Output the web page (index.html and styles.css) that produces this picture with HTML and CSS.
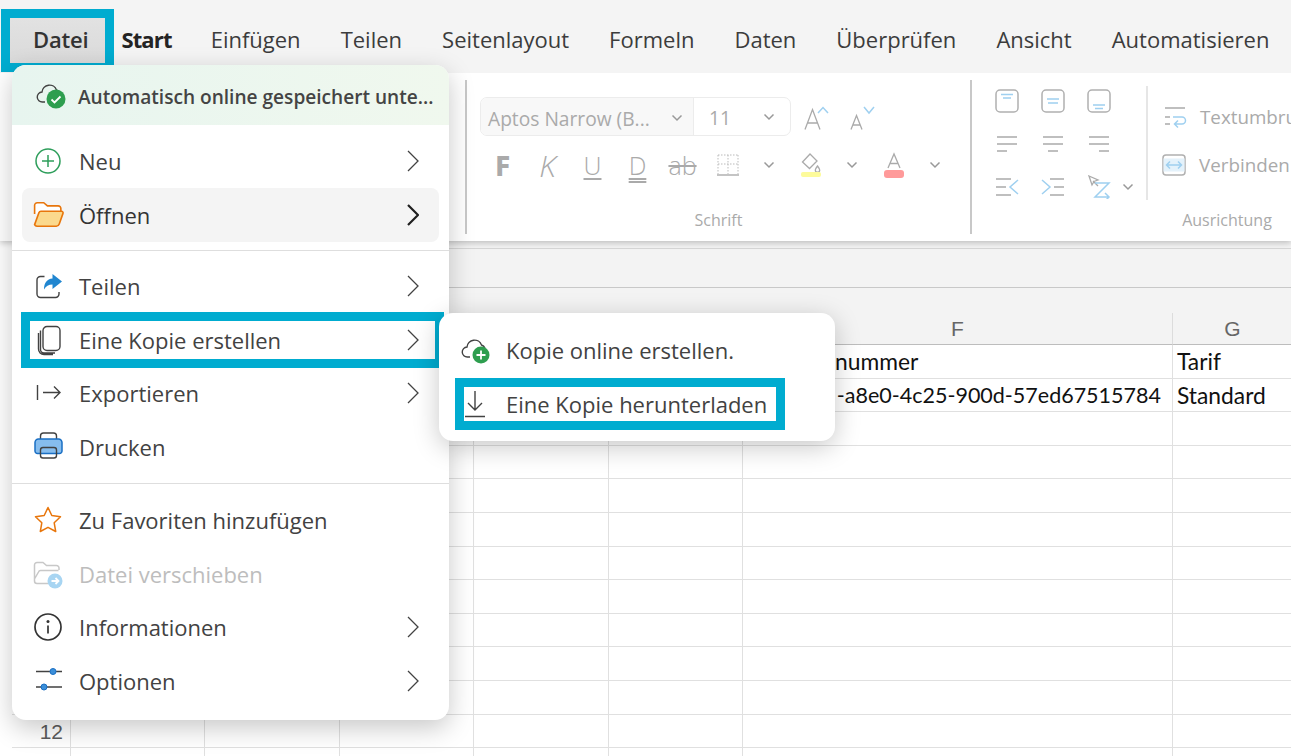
FILE: index.html
```html
<!DOCTYPE html>
<html lang="de">
<head>
<meta charset="utf-8">
<title>Excel – Datei</title>
<link rel="stylesheet" href="styles.css">
</head>
<body>
<div class="app">
  <nav class="tabs">
    <span class="tab tab-file">Datei</span>
    <span class="tab tab-active">Start</span>
    <span class="tab">Einfügen</span>
    <span class="tab">Teilen</span>
    <span class="tab">Seitenlayout</span>
    <span class="tab">Formeln</span>
    <span class="tab">Daten</span>
    <span class="tab">Überprüfen</span>
    <span class="tab">Ansicht</span>
    <span class="tab">Automatisieren</span>
  </nav>

  <section class="ribbon">
    <div class="group group-font">
      <div class="font-row">
        <div class="combo">
          <span class="combo-name">Aptos Narrow (B...<svg class="chev-s" viewBox="0 0 12 8"><path d="M1.500 1.500 6 6l4.500-4.500"/></svg></span>
          <span class="combo-size">11<svg class="chev-s" viewBox="0 0 12 8"><path d="M1.500 1.500 6 6l4.500-4.500"/></svg></span>
        </div>
        <svg class="grow" viewBox="0 0 30 32"><path class="g" d="M3 28.500 10.500 8.500 18 28.500M5.500 22h10"/><path class="b" d="M16 12l5-5.500 5 5.500"/></svg>
        <svg class="shrink" viewBox="0 0 30 32"><path class="g" d="M2 28.500 7.500 14.500 13 28.500M4 24h7"/><path class="b" d="M15 6l5 6 5-6"/></svg>
      </div>
      <div class="format-row">
        <span class="tool t-bold">F</span>
        <span class="tool t-italic">K</span>
        <span class="tool t-under">U</span>
        <span class="tool t-double">D</span>
        <span class="tool t-strike">ab</span>
        <span class="tool"><svg class="ic22" viewBox="0 0 22 24"><path class="dot" d="M1 2h20M1 11h20M1 2v19M11 2v19M21 2v19"/><path class="g2" d="M0 22h22"/></svg></span>
        <span class="drop"><svg class="chev-s" viewBox="0 0 12 8"><path d="M1.500 1.500 6 6l4.500-4.500"/></svg></span>
        <span class="tool"><svg class="ic22" viewBox="0 0 22 26"><path class="g" d="M10 2 2.500 10l7 6.500L17 9zM17.500 14c-1.500 2-2.200 3-2.200 4a2.200 2.200 0 0 0 4.400 0c0-1-.7-2-2.200-4z"/><rect class="swatch-y" x="1" y="20" width="20" height="5" rx="2"/></svg></span>
        <span class="drop"><svg class="chev-s" viewBox="0 0 12 8"><path d="M1.500 1.500 6 6l4.500-4.500"/></svg></span>
        <span class="tool"><svg class="ic22" viewBox="0 0 22 26"><path class="g" d="M5 16 11 2l6 14M7 11.500h8"/><rect class="swatch-r" x="1" y="18" width="20" height="8" rx="3"/></svg></span>
        <span class="drop"><svg class="chev-s" viewBox="0 0 12 8"><path d="M1.500 1.500 6 6l4.500-4.500"/></svg></span>
      </div>
      <div class="group-label">Schrift</div>
    </div>

    <div class="group group-align">
      <div class="align-body">
        <div class="align-grid">
          <span class="cell"><svg class="ic24" viewBox="0 0 24 24"><rect class="g2" x="1" y="1" width="22" height="22" rx="4"/><path class="b" d="M6 5.500h12M8 9h8"/></svg></span>
          <span class="cell"><svg class="ic24" viewBox="0 0 24 24"><rect class="g2" x="1" y="1" width="22" height="22" rx="4"/><path class="b" d="M6 10h12M7 14h10"/></svg></span>
          <span class="cell"><svg class="ic24" viewBox="0 0 24 24"><rect class="g2" x="1" y="1" width="22" height="22" rx="4"/><path class="b" d="M6 16h12M8 19.500h8"/></svg></span>
          <span></span>
          <span class="cell"><svg class="ic24" viewBox="0 0 24 24"><path class="g" d="M2 5h20M2 12h20M2 19h10"/></svg></span>
          <span class="cell"><svg class="ic24" viewBox="0 0 24 24"><path class="g" d="M2 5h20M2 12h20M7 19h10"/></svg></span>
          <span class="cell"><svg class="ic24" viewBox="0 0 24 24"><path class="g" d="M2 5h20M2 12h20M12 19h10"/></svg></span>
          <span></span>
          <span class="cell"><svg class="ic24" viewBox="0 0 24 24"><path class="g" d="M1 4h15M1 12h10M1 20h15"/><path class="b" d="M23 5l-8 7 8 7"/></svg></span>
          <span class="cell"><svg class="ic24" viewBox="0 0 24 24"><path class="g" d="M9 4h14M13 12h10M9 20h14"/><path class="b" d="M1 5l8 7-8 7"/></svg></span>
          <span class="cell"><svg class="ic24" viewBox="0 0 24 24"><path class="g" d="M2 1l9 4-4 1.500L5 10zM6 6l5 5"/><path class="b" d="M8 8h14L8 22h14M18 18l4 4-4 4"/></svg></span>
          <span class="cell"><svg class="chev-s" viewBox="0 0 12 8"><path d="M1.500 1.500 6 6l4.500-4.500"/></svg></span>
        </div>
        <div class="wrap-col">
          <div class="wrap-row"><svg class="ic24" viewBox="0 0 24 24"><path class="g" d="M2 3h20M2 12h5M2 19h5"/><path class="b" d="M10 12h9a3.500 3.500 0 0 1 0 7h-7M15 15.500l-3.500 3.500 3.500 3.500"/></svg><span>Textumbruch</span></div>
          <div class="wrap-row wrap-merge"><svg class="ic24" viewBox="0 0 24 24"><rect class="g2" x="1" y="2" width="22" height="20" rx="3"/><rect class="b-soft" x="1.500" y="5.500" width="21" height="13"/><path class="b" d="M5 12h14M8 8.500 4.500 12 8 15.500M16 8.500l3.500 3.500-3.500 3.500"/></svg><span>Verbinden</span></div>
        </div>
      </div>
      <div class="group-label">Ausrichtung</div>
    </div>
  </section>

  <div class="formula-band"><div class="formula-line"></div></div>

  <div class="sheet">
    <div class="head"></div><div class="head"></div><div class="head"></div><div class="head"></div><div class="head"></div><div class="head"></div><div class="head">F</div><div class="head">G</div>
    <div class="c"></div><div class="c"></div><div class="c"></div><div class="c"></div><div class="c"></div><div class="c"></div><div class="c val val-a">nummer</div><div class="c val">Tarif</div>
    <div class="c"></div><div class="c"></div><div class="c"></div><div class="c"></div><div class="c"></div><div class="c"></div><div class="c val val-b">-a8e0-4c25-900d-57ed67515784</div><div class="c val">Standard</div>
    <div class="c"></div><div class="c"></div><div class="c"></div><div class="c"></div><div class="c"></div><div class="c"></div><div class="c"></div><div class="c"></div>
    <div class="c"></div><div class="c"></div><div class="c"></div><div class="c"></div><div class="c"></div><div class="c"></div><div class="c"></div><div class="c"></div>
    <div class="c"></div><div class="c"></div><div class="c"></div><div class="c"></div><div class="c"></div><div class="c"></div><div class="c"></div><div class="c"></div>
    <div class="c"></div><div class="c"></div><div class="c"></div><div class="c"></div><div class="c"></div><div class="c"></div><div class="c"></div><div class="c"></div>
    <div class="c"></div><div class="c"></div><div class="c"></div><div class="c"></div><div class="c"></div><div class="c"></div><div class="c"></div><div class="c"></div>
    <div class="c"></div><div class="c"></div><div class="c"></div><div class="c"></div><div class="c"></div><div class="c"></div><div class="c"></div><div class="c"></div>
    <div class="c"></div><div class="c"></div><div class="c"></div><div class="c"></div><div class="c"></div><div class="c"></div><div class="c"></div><div class="c"></div>
    <div class="c"></div><div class="c"></div><div class="c"></div><div class="c"></div><div class="c"></div><div class="c"></div><div class="c"></div><div class="c"></div>
    <div class="c"></div><div class="c"></div><div class="c"></div><div class="c"></div><div class="c"></div><div class="c"></div><div class="c"></div><div class="c"></div>
    <div class="c rownum">12</div><div class="c"></div><div class="c"></div><div class="c"></div><div class="c"></div><div class="c"></div><div class="c"></div><div class="c"></div>
    <div class="c"></div><div class="c"></div><div class="c"></div><div class="c"></div><div class="c"></div><div class="c"></div><div class="c"></div><div class="c"></div>
  </div>

  <aside class="menu">
    <div class="menu-status">
      <svg class="icon" viewBox="0 0 30 30"><path class="stroke-d" d="M9 22H6.500a5 5 0 0 1-.5-10 7.500 7.500 0 0 1 14.500-2 6 6 0 0 1 3.500 3"/><circle cx="20" cy="19" r="9.500" fill="#2e9e4f"/><path class="stroke-w" d="M15.500 19.500l3 3 6-6"/></svg>
      <span class="status-text">Automatisch online gespeichert unte...</span>
    </div>
    <div class="menu-section sec-a">
      <div class="item"><svg class="icon" viewBox="0 0 30 30"><circle class="stroke-g" cx="15" cy="15" r="12"/><path class="stroke-g" d="M15 9v12M9 15h12"/></svg><span class="label">Neu</span><svg class="chev" viewBox="0 0 12 22"><path d="M1 1l10 10L1 21"/></svg></div>
      <div class="item item-hover"><svg class="icon" viewBox="0 1 28 28"><path d="M1.500 14V6a2.500 2.500 0 0 1 2.500-2.500h6l3.500 3h10a2.500 2.500 0 0 1 2.500 2.500v2.500" fill="#fff" stroke="#e8760c" stroke-width="1.500"/><path d="M1.500 24l4-11a2 2 0 0 1 2-1.500h19a1.500 1.500 0 0 1 1.500 2l-3.500 10a3 3 0 0 1-3 2H4a2.500 2.500 0 0 1-2.500-1.500z" fill="#fbd98d" stroke="#e8760c" stroke-width="1.500"/></svg><span class="label">Öffnen</span><svg class="chev" viewBox="0 0 12 22"><path d="M1 1l10 10L1 21"/></svg></div>
    </div>
    <div class="menu-section sec-b">
      <div class="item"><svg class="icon" viewBox="-1.500 0 30 30"><path class="stroke-d" d="M10 5.500H6a3.500 3.500 0 0 0-3.500 3.500v14A3.500 3.500 0 0 0 6 26.500h15a3.500 3.500 0 0 0 3.500-3.500v-2"/><path d="M18 3l9.500 7.500-9.500 7.500v-4.500c-4 0-6.500 1.500-8.500 5 0-6.500 3-10.500 8.500-11z" fill="#2086d0"/></svg><span class="label">Teilen</span><svg class="chev" viewBox="0 0 12 22"><path d="M1 1l10 10L1 21"/></svg></div>
      <div class="item item-marked"><svg class="icon" viewBox="-1 0 30 30"><rect class="stroke-d" x="9" y="1.500" width="17" height="24" rx="4"/><path class="stroke-d" d="M6.500 5.500v19a3.500 3.500 0 0 0 3.500 3.500h11M4.500 8v16a5.500 5.500 0 0 0 5.500 5.500h9"/></svg><span class="label">Eine Kopie erstellen</span><svg class="chev" viewBox="0 0 12 22"><path d="M1 1l10 10L1 21"/></svg></div>
      <div class="item"><svg class="icon" viewBox="0 0 30 30"><path class="stroke-d" d="M4.500 7v15M10 14.500h17M21 8.500l6 6-6 6"/></svg><span class="label">Exportieren</span><svg class="chev" viewBox="0 0 12 22"><path d="M1 1l10 10L1 21"/></svg></div>
      <div class="item"><svg class="icon" viewBox="-.5 2 30 30"><path class="stroke-d" d="M7 9V6a3 3 0 0 1 3-3h10a3 3 0 0 1 3 3v3" fill="#fff"/><path d="M5 9h20a3.500 3.500 0 0 1 3.500 3.500V21a2.500 2.500 0 0 1-2.500 2.500H4A2.500 2.500 0 0 1 1.500 21v-8.500A3.500 3.500 0 0 1 5 9z" fill="#86bdee" stroke="#1a6fc4" stroke-width="1.500"/><rect class="stroke-d" x="7" y="17.500" width="16" height="10.500" rx="2.500" fill="#fff"/></svg><span class="label">Drucken</span></div>
    </div>
    <div class="menu-section sec-c">
      <div class="item"><svg class="icon" viewBox="0 0 30 30"><path d="M15 2.500l3.800 8 8.700 1.200-6.300 6.100 1.500 8.700L15 22.300 7.300 26.500l1.500-8.700-6.300-6.100 8.700-1.200z" fill="none" stroke="#e8760c" stroke-width="1.500" stroke-linejoin="round"/></svg><span class="label">Zu Favoriten hinzufügen</span></div>
      <div class="item item-disabled"><svg class="icon" viewBox="0 0 30 30"><path d="M1.500 22V6A2.500 2.500 0 0 1 4 3.500h6l3.500 3h10a2.500 2.500 0 0 1 2.500 2.500v2M1.500 22a2.500 2.500 0 0 0 2.500 2.500h11M1.500 20l4-7a2.500 2.500 0 0 1 2-1.500h18" fill="none" stroke="#c8c8c8" stroke-width="1.500"/><circle cx="22" cy="22" r="7.500" fill="#a8d5f2"/><path class="stroke-w" d="M18.500 22h7M22.500 19l3 3-3 3"/></svg><span class="label">Datei verschieben</span></div>
      <div class="item"><svg class="icon" viewBox="0 0 30 30"><circle class="stroke-d2" cx="15" cy="15" r="13"/><circle cx="15" cy="9.500" r="1.500" fill="#333"/><path class="stroke-d2" d="M15 13.500v8" stroke-width="2.200"/></svg><span class="label">Informationen</span><svg class="chev" viewBox="0 0 12 22"><path d="M1 1l10 10L1 21"/></svg></div>
      <div class="item"><svg class="icon" viewBox="0 0 30 30"><path class="stroke-d" d="M3 5.500h26M3 21h26"/><circle cx="20" cy="5.500" r="3" fill="#3b8fd9" stroke="#1a6fc4"/><circle cx="11" cy="21" r="3" fill="#3b8fd9" stroke="#1a6fc4"/></svg><span class="label">Optionen</span><svg class="chev" viewBox="0 0 12 22"><path d="M1 1l10 10L1 21"/></svg></div>
    </div>
  </aside>

  <aside class="submenu">
    <div class="sub-item"><svg class="icon" viewBox="3 0 30 30"><path class="stroke-d" d="M9 22H6.500a5 5 0 0 1-.5-10 7.500 7.500 0 0 1 14.500-2 6 6 0 0 1 3.500 3"/><circle cx="20" cy="20" r="8.500" fill="#2e9e4f"/><path class="stroke-w" d="M20 15.500v9M15.500 20h9"/></svg><span class="label">Kopie online erstellen.</span></div>
    <div class="sub-item sub-marked"><svg class="icon" viewBox="3 0 30 30"><path class="stroke-d" d="M14 2v19M7 14l7 7 7-7M4 27.500h20"/></svg><span class="label">Eine Kopie herunterladen</span></div>
  </aside>
</div>
</body>
</html>
```
FILE: styles.css
```css
* { box-sizing: border-box; }
html, body { margin: 0; padding: 0; height: 100%; background: #fff; overflow: hidden; }
body { font-family: "Open Sans", "Noto Sans", sans-serif; color: #424242; }
.app { position: relative; width: 1291px; height: 756px; overflow: hidden; background: #fff; }

/* tabs */
.tabs { height: 73px; background: #f4f4f4; display: flex; align-items: center; gap: 40px; padding: 0 0 0 33px; font-size: 22px; white-space: nowrap; color: #3c3c3c; }
.tab { line-height: 30px; margin-top: 4px; }
.tab-file { font-weight: 600; color: #333; margin-right: -7px; letter-spacing: -.2px; position: relative; isolation: isolate; }
.tab-file::before { content: ""; position: absolute; left: -23px; right: -17px; top: -6px; bottom: -9px; background: linear-gradient(#e2e2e2, #dadada); outline: 9px solid #00acd0; z-index: -1; }
.tab-active { font-weight: 700; color: #242424; letter-spacing: -.85px; margin-right: -1px; }

/* ribbon */
.ribbon { position: relative; z-index: 1; height: 168px; background: #fff; box-shadow: 0 2px 6px rgba(0,0,0,.22); padding: 7px 0 7px 465px; display: flex; overflow: hidden; color: #aaa; clip-path: inset(0 0 -10px 0); }
.group { display: flex; flex-direction: column; border-left: 2px solid #c8c8c8; flex: none; }
.group-font { width: 505px; padding: 17px 0 4px 13px; }
.group-align { width: 512px; padding: 0 0 4px 12px; }
.group-label { margin-top: auto; text-align: center; font-size: 16px; line-height: 20px; color: #aaa; }
.group-font .group-label { padding-right: 13px; }
.group-align .group-label { padding-right: 12px; }

.font-row { display: flex; align-items: center; height: 39px; }
.combo { width: 311px; height: 39px; display: flex; border: 1px solid #ececec; border-radius: 7px; font-size: 19.200px; color: #aaa; overflow: hidden; }
.combo-name { width: 213px; flex: none; background: #f8f8f8; border-right: 1px solid #ececec; padding: 3px 10px 0 7px; display: flex; align-items: center; justify-content: space-between; }
.combo-size { flex: 1; display: flex; align-items: center; justify-content: space-between; padding: 1px 15px 0; }
.chev-s { width: 12px; height: 8px; flex: none; }
.chev-s path { fill: none; stroke: #999; stroke-width: 1.500; }
.grow { width: 30px; height: 32px; margin-left: 11px; }
.shrink { width: 30px; height: 32px; margin-left: 17px; }
.g { fill: none; stroke: #aaa; stroke-width: 1.300; }
.g2 { fill: none; stroke: #b0b0b0; stroke-width: 1.500; }
.b { fill: none; stroke: #9fd0f0; stroke-width: 1.500; }
.b-soft { fill: #e4f2fb; }
.dot { fill: none; stroke: #bbb; stroke-width: 1; stroke-dasharray: 1.500 1.500; }
.swatch-y { fill: #fdfb9b; }
.swatch-r { fill: #ff9a9a; }

.format-row { display: flex; align-items: center; height: 34px; margin-top: 12px; }
.tool { width: 45px; height: 34px; flex: none; display: flex; align-items: center; justify-content: center; font-size: 25px; color: #aaa; }
.drop { width: 38px; height: 34px; flex: none; display: flex; align-items: center; justify-content: center; padding-right: 1px; }
.ic22 { width: 22px; height: 26px; }
.ic24 { width: 24px; height: 24px; }
.t-bold { font-weight: 800; font-family: "Noto Sans", sans-serif; font-size: 28px; }
.t-italic { font-style: italic; font-weight: 300; font-size: 30px; }
.t-under { text-decoration: underline; text-underline-offset: 3px; text-decoration-thickness: 1.500px; font-weight: 300; }
.t-double { text-decoration: underline double; text-underline-offset: 3px; text-decoration-thickness: 1.500px; font-weight: 300; }
.t-strike { text-decoration: line-through; text-decoration-thickness: 1.500px; font-weight: 300; }

.align-body { display: flex; align-items: flex-start; }
.align-grid { display: grid; grid-template-columns: 46px 46px 46px 12px; grid-auto-rows: 42.700px; width: 150px; }
.cell { display: flex; align-items: center; justify-content: center; }
.wrap-col { margin: 6px 0 0 12px; border-left: 2px solid #e6e6e6; height: 114px; padding: 15px 0 0 15px; }
.wrap-row { display: flex; align-items: center; height: 32px; gap: 13px; font-size: 18.800px; color: #aaa; white-space: nowrap; }
.wrap-merge { margin-top: 16px; margin-left: -1px; }

/* band */
.formula-band { height: 47px; margin-left: 12px; padding-top: 7px; background: #f3f3f3; }
.formula-line { height: 40px; border-top: 1px solid #d6d6d6; border-bottom: 1px solid #c8c8c8; }

/* sheet */
.sheet { margin-left: 12px; padding-top: 25px; background: linear-gradient(#f3f3f3 25px, #fff 25px); display: grid; grid-template-columns: 59px repeat(5, 134.400px) 430px 120px; grid-template-rows: 32px; grid-auto-rows: 33.600px; font-family: "Lato", sans-serif; }
.head { height: 32px; background: #f3f3f3; border-right: 1px solid #dcdcdc; border-bottom: 1px solid #bdbdbd; display: flex; align-items: center; justify-content: center; font: 21px "Liberation Sans", sans-serif; color: #666; }
.c { border-right: 1px solid #e0e0e0; border-bottom: 1px solid #e0e0e0; }
.val { font-size: 22.800px; line-height: 33px; color: #111; padding-left: 4px; white-space: nowrap; overflow: hidden; }
.val-a { padding-left: 92px; }
.val-b { font-size: 21.500px; padding-left: 0; padding-right: 11px; text-align: right; }
.rownum { font: 21px/34px "Liberation Sans", sans-serif; color: #5c5c5c; text-align: right; padding-right: 7px; }

/* menu */
.menu { position: absolute; left: 12px; top: 65px; width: 437px; height: 655px; z-index: 2; background: #fff; border-radius: 14px; box-shadow: 0 8px 26px rgba(0,0,0,.22); }
.menu-status { height: 60px; border-radius: 14px 14px 0 0; background: linear-gradient(90deg, #e7f5ef, #f0f8ee); display: flex; align-items: center; gap: 14px; padding-left: 24px; font-size: 19.100px; font-weight: 600; color: #444; white-space: nowrap; }
.status-text { margin-top: 3px; }
.sec-a { padding: 9px 10px 8px; border-bottom: 1px solid #dedede; }
.sec-b { padding: 8px 10px 9px; border-bottom: 1px solid #dedede; }
.sec-b .item { height: 53.800px; }
.sec-c { padding: 9px 10px 0; }
.sec-c .item { height: 53.600px; }
.item { position: relative; height: 54px; display: flex; align-items: center; padding: 0 20px 0 11px; gap: 18px; border-radius: 8px; font-size: 22px; color: #424242; }
.icon { width: 30px; height: 30px; flex: none; margin-right: -2px; overflow: visible; }
.label { flex: 1; white-space: nowrap; }
.chev { width: 12px; height: 22px; flex: none; }
.chev path { fill: none; stroke: #424242; stroke-width: 1.300; }
.item-hover { background: #f4f4f4; color: #333; }
.item-hover .chev path { stroke: #1f1f1f; stroke-width: 2.200; }
.item-disabled { color: #bdbdbd; }
.item-marked { z-index: 4; }
.item-marked::after { content: ""; position: absolute; left: -1px; right: -5px; top: -1px; bottom: -1px; border: 9px solid #00acd0; }
.stroke-d { fill: none; stroke: #424242; stroke-width: 1.400; }
.stroke-d2 { fill: none; stroke: #333; stroke-width: 1.700; }
.stroke-g { fill: none; stroke: #2e9e5b; stroke-width: 1.500; }
.stroke-w { fill: none; stroke: #fff; stroke-width: 1.800; }

/* submenu */
.submenu { position: absolute; left: 439px; top: 313px; width: 396px; height: 128px; z-index: 3; background: #fff; border-radius: 14px; box-shadow: 0 6px 26px rgba(0,0,0,.22); padding: 10px 0 0 25px; }
.sub-item { height: 54px; width: 312px; display: flex; align-items: center; gap: 14px; font-size: 22px; color: #424242; }
.sub-marked { outline: 9px solid #00acd0; height: 34px; margin-top: 10px; }
```
